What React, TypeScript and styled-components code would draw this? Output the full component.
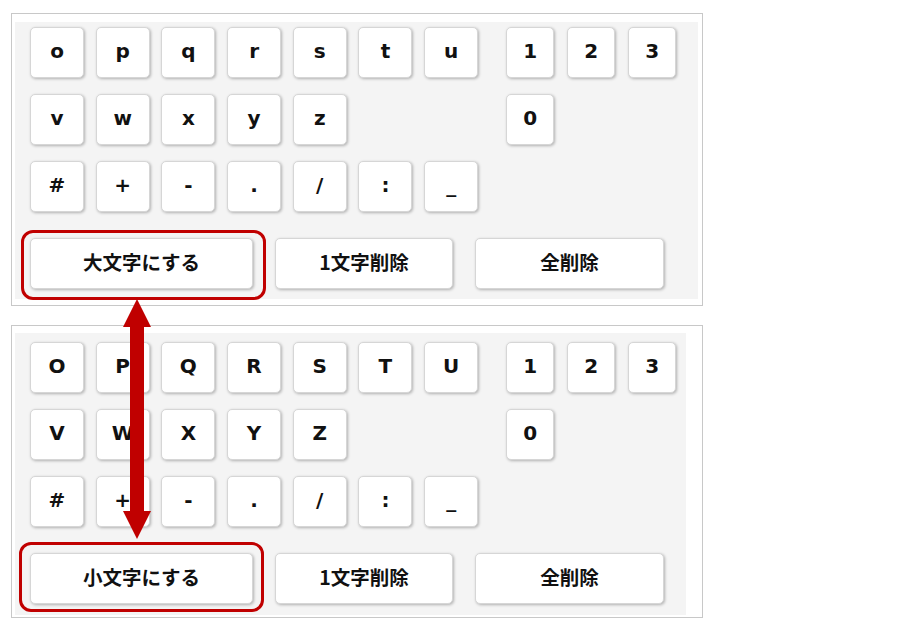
import React from "react";
import styled, { createGlobalStyle } from "styled-components";

const Global = createGlobalStyle`
  html, body { margin: 0; padding: 0; background: #fff; }
  body { font-family: "DejaVu Sans", "Noto Sans CJK JP", sans-serif; }
`;

const Page = styled.div`
  position: relative;
  width: 899px;
  height: 628px;
  padding: 13px 0 0 11px;
  box-sizing: border-box;
  display: flex;
  flex-direction: column;
  gap: 19px;
`;

const Panel = styled.section`
  box-sizing: border-box;
  width: 692px;
  height: 293px;
  border: 1px solid #c8c8c8;
  padding: ${(p: { $pad: string }) => p.$pad};
`;

const Board = styled.div<{ $w: number; $h: number; $top: number }>`
  box-sizing: border-box;
  width: ${(p) => p.$w}px;
  height: ${(p) => p.$h}px;
  background: #f4f4f4;
  padding: ${(p) => p.$top}px 0 0 15px;
  display: flex;
  flex-direction: column;
  gap: 16px;
`;

const KeyRow = styled.div`
  display: flex;
  height: 51px;
  gap: 28px;
`;

const LetterGroup = styled.div`
  display: grid;
  grid-template-columns: repeat(7, 54px);
  column-gap: 11.7px;
`;

const NumberGroup = styled.div`
  display: grid;
  grid-template-columns: repeat(3, 48px);
  column-gap: 13px;
`;

const Key = styled.button`
  box-sizing: border-box;
  height: 51px;
  margin: 0;
  padding: 0 0 3px;
  background: #fff;
  border: 1px solid #d6d6d6;
  border-radius: 5px;
  box-shadow: 1px 1px 3px rgba(0, 0, 0, 0.28);
  font-family: "DejaVu Sans", "Noto Sans CJK JP", sans-serif;
  font-weight: bold;
  font-size: 20px;
  color: #111;
  display: flex;
  align-items: center;
  justify-content: center;
`;

const Blank = styled.div``;

const ActionRow = styled.div`
  display: flex;
  gap: 22px;
  margin-top: 10px;
`;

const ActionKey = styled(Key)<{ $w: number }>`
  width: ${(p) => p.$w}px;
  font-family: "Noto Sans CJK JP", sans-serif;
  font-size: 19.5px;
  padding: 0 0 5px;
`;

const Highlight = styled.div<{ $x: number; $y: number; $w: number; $h: number }>`
  position: absolute;
  left: ${(p) => p.$x}px;
  top: ${(p) => p.$y}px;
  width: ${(p) => p.$w}px;
  height: ${(p) => p.$h}px;
  box-sizing: border-box;
  border: 3px solid #c00000;
  border-radius: 12px;
  pointer-events: none;
`;

const ArrowSvg = styled.svg`
  position: absolute;
  left: 123px;
  top: 299px;
  width: 28px;
  height: 240px;
`;

const lower1 = ["o", "p", "q", "r", "s", "t", "u"];
const lower2 = ["v", "w", "x", "y", "z"];
const symbols = ["#", "+", "-", ".", "/", ":", "_"];

function Keyboard({
  upper,
  w,
  h,
  top,
  toggleLabel,
}: {
  upper: boolean;
  w: number;
  h: number;
  top: number;
  toggleLabel: string;
}) {
  const c = (s: string) => (upper ? s.toUpperCase() : s);
  return (
    <Board $w={w} $h={h} $top={top}>
      <KeyRow>
        <LetterGroup>
          {lower1.map((k) => (
            <Key key={k}>{c(k)}</Key>
          ))}
        </LetterGroup>
        <NumberGroup>
          {["1", "2", "3"].map((k) => (
            <Key key={k}>{k}</Key>
          ))}
        </NumberGroup>
      </KeyRow>
      <KeyRow>
        <LetterGroup>
          {lower2.map((k) => (
            <Key key={k}>{c(k)}</Key>
          ))}
          <Blank />
          <Blank />
        </LetterGroup>
        <NumberGroup>
          <Key>0</Key>
        </NumberGroup>
      </KeyRow>
      <KeyRow>
        <LetterGroup>
          {symbols.map((k) => (
            <Key key={k}>{k}</Key>
          ))}
        </LetterGroup>
      </KeyRow>
      <ActionRow>
        <ActionKey $w={223}>{toggleLabel}</ActionKey>
        <ActionKey $w={178}>1文字削除</ActionKey>
        <ActionKey $w={189}>全削除</ActionKey>
      </ActionRow>
    </Board>
  );
}

export default function App() {
  return (
    <>
      <Global />
      <Page>
        <Panel $pad="8px 0 0 3px">
          <Keyboard upper={false} w={683} h={277} top={5} toggleLabel="大文字にする" />
        </Panel>
        <Panel $pad="7px 0 0 3px">
          <Keyboard upper w={671} h={282} top={9} toggleLabel="小文字にする" />
        </Panel>
        <Highlight $x={21} $y={230} $w={245} $h={70} />
        <Highlight $x={19} $y={542} $w={245} $h={70} />
        <ArrowSvg viewBox="0 0 28 240">
          <polygon
            points="14,0 28,28 21,28 21,212 28,212 14,240 0,212 7,212 7,28 0,28"
            fill="#c00000"
          />
        </ArrowSvg>
      </Page>
    </>
  );
}
